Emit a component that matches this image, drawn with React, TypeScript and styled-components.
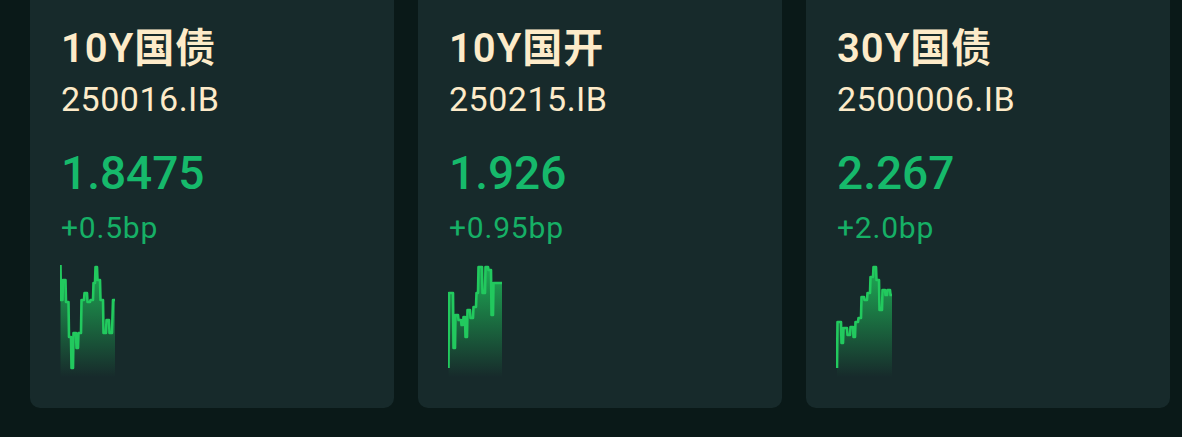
import React from "react";
import styled, { createGlobalStyle } from "styled-components";

const GlobalStyle = createGlobalStyle`
  html, body {
    margin: 0;
    padding: 0;
    background: #0a1918;
    overflow: hidden;
  }
  body {
    font-family: Roboto, "Noto Sans CJK SC", sans-serif;
  }
`;

type Bond = {
  name: string;
  code: string;
  yieldValue: string;
  change: string;
  points: number[][];
};

const bonds: Bond[] = [
  {
    name: "10Y国债",
    code: "250016.IB",
    yieldValue: "1.8475",
    change: "+0.5bp",
    points: [
      [0.5, 0], [1, 35], [2.5, 35], [3, 15], [5.5, 15], [6, 37], [8.5, 37], [9, 72],
      [11, 72], [11.5, 103], [13, 103], [13.5, 68], [16, 68], [16.5, 83], [18, 83],
      [18.5, 68], [21, 68], [21.5, 35], [24, 35], [24.5, 28], [27, 28], [27.5, 37],
      [30, 37], [30.5, 35], [33, 35], [33.5, 18], [35, 18], [35.5, 2], [37, 2],
      [37.5, 15], [40, 15], [40.5, 35], [43, 35], [43.5, 68], [46, 68], [46.5, 55],
      [49, 55], [49.5, 68], [52, 68], [53, 35], [55, 35],
    ],
  },
  {
    name: "10Y国开",
    code: "250215.IB",
    yieldValue: "1.926",
    change: "+0.95bp",
    points: [
      [0.5, 103], [1, 28], [5, 28], [5.5, 83], [7, 83], [7.5, 50], [10, 50], [10.5, 55],
      [13, 55], [13.5, 60], [15, 60], [15.5, 52], [17, 52], [17.5, 72], [19, 72],
      [19.5, 45], [22, 45], [22.5, 53], [25, 53], [25.5, 42], [28, 42], [28.5, 28],
      [30, 28], [30.5, 2], [34, 2], [34.5, 28], [37, 28], [37.5, 2], [40, 2], [40.5, 5],
      [43, 5], [43.5, 50], [45, 50], [45.5, 18], [54, 18],
    ],
  },
  {
    name: "30Y国债",
    code: "2500006.IB",
    yieldValue: "2.267",
    change: "+2.0bp",
    points: [
      [1, 103], [1.5, 57], [5, 57], [5.5, 78], [7, 78], [7.5, 63], [11, 63], [11.5, 70],
      [14, 70], [14.5, 62], [17, 62], [17.5, 72], [19, 72], [19.5, 57], [22, 57],
      [22.5, 53], [25, 53], [25.5, 32], [28, 32], [28.5, 35], [31, 35], [31.5, 28],
      [34, 28], [34.5, 12], [37, 12], [37.5, 2], [40, 2], [40.5, 15], [43, 15],
      [43.5, 45], [46, 45], [46.5, 25], [49, 25], [49.5, 30], [51, 30], [51.5, 25],
      [54, 25], [54.5, 30], [56, 30],
    ],
  },
];

const CHART_W = 58;
const CHART_H = 112;

const Sparkline: React.FC<{ id: string; points: number[][] }> = ({ id, points }) => {
  const line = points.map(([x, y]) => `${x},${y}`).join(" ");
  const first = points[0];
  const last = points[points.length - 1];
  const area = `${first[0]},${CHART_H} ${line} ${last[0]},${CHART_H}`;
  return (
    <ChartSvg width={CHART_W} height={CHART_H} viewBox={`0 0 ${CHART_W} ${CHART_H}`}>
      <defs>
        <linearGradient id={id} x1="0" y1="0" x2="0" y2="1">
          <stop offset="0%" stopColor="#1fc45c" stopOpacity="0.85" />
          <stop offset="100%" stopColor="#1fc45c" stopOpacity="0" />
        </linearGradient>
      </defs>
      <polygon points={area} fill={`url(#${id})`} />
      <polyline
        points={line}
        fill="none"
        stroke="#22c95e"
        strokeWidth={2.6}
        strokeLinejoin="round"
      />
    </ChartSvg>
  );
};

const App: React.FC = () => {
  return (
    <>
      <GlobalStyle />
      <Page>
        <CardRow>
          {bonds.map((b, i) => (
            <Card key={b.code}>
              <Title>{b.name}</Title>
              <Code>{b.code}</Code>
              <Yield>{b.yieldValue}</Yield>
              <Change>{b.change}</Change>
              <Sparkline id={`spark-${i}`} points={b.points} />
            </Card>
          ))}
        </CardRow>
      </Page>
    </>
  );
};

export default App;

const Page = styled.div`
  height: 437px;
  overflow: hidden;
  background: #0a1918;
`;

const CardRow = styled.div`
  display: flex;
  gap: 24px;
  padding-left: 30px;
  margin-top: -12px;
`;

const Card = styled.div`
  width: 364px;
  height: 420px;
  box-sizing: border-box;
  flex-shrink: 0;
  padding: 37px 30px 0 30px;
  background: #172a2b;
  border-radius: 10px;
  display: flex;
  flex-direction: column;
  align-items: flex-start;
`;

const Title = styled.div`
  font-size: 40px;
  line-height: 48px;
  font-weight: 600;
  letter-spacing: 1px;
  color: #fdebc9;
  margin-left: 1px;
`;

const Code = styled.div`
  margin-top: 4px;
  font-size: 34px;
  line-height: 44px;
  letter-spacing: 0.5px;
  color: #fdebc9;
  margin-left: 1px;
`;

const Yield = styled.div`
  margin-top: 24px;
  font-size: 46px;
  line-height: 56px;
  font-weight: 500;
  color: #16b96b;
  margin-left: 1px;
`;

const Change = styled.div`
  margin-top: 9px;
  font-size: 30px;
  line-height: 36px;
  letter-spacing: 0.8px;
  color: #16b066;
  margin-left: 1px;
`;

const ChartSvg = styled.svg`
  display: block;
  margin-top: 19px;
`;
